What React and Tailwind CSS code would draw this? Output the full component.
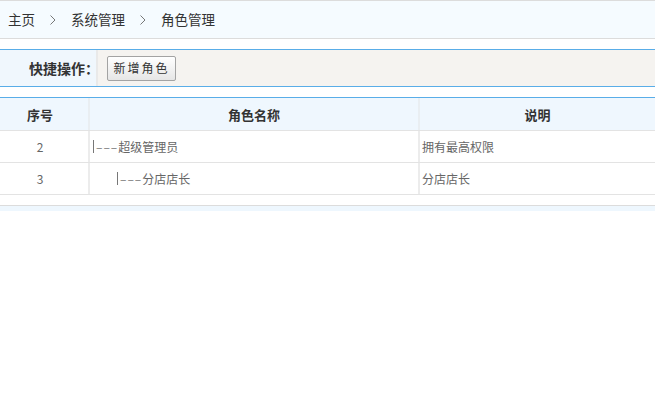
import React from 'react';

const roles = [
  { id: 2, name: '超级管理员', level: 0, desc: '拥有最高权限' },
  { id: 3, name: '分店店长', level: 1, desc: '分店店长' },
];

const Chevron = () => (
  <svg width="8" height="12" viewBox="0 0 8 12" className="mx-[14px]">
    <path d="M1.5 1.5 L6 6 L1.5 10.5" fill="none" stroke="#777" strokeWidth="1" />
  </svg>
);

const App = () => {
  return (
    <div className="w-[655px] h-[413px] bg-white font-['Noto_Sans_CJK_SC','Microsoft_YaHei',sans-serif] overflow-hidden">
      {/* --- Breadcrumb --- */}
      <div className="h-[39px] border-y border-[#dcdcdc] bg-[#f5fbff] flex items-center pl-[8px] text-[13.5px] text-[#333] leading-none">
        <span>主页</span>
        <Chevron />
        <span>系统管理</span>
        <Chevron />
        <span>角色管理</span>
      </div>

      {/* --- Quick Actions Toolbar --- */}
      <div className="mt-[10px] h-[38px] border-y border-[#59ade8] flex">
        <div className="w-[98px] shrink-0 bg-[#f0f7fd] border-r-2 border-[#e9e9e9] flex items-center pl-[29px] text-[14px] font-bold text-[#333] leading-none whitespace-nowrap">
          快捷操作：
        </div>
        <div className="flex-1 bg-[#f5f3f0] flex items-center pl-[9px]">
          <button className="h-[25px] w-[69px] border border-[#a3a3a3] rounded-[2px] bg-gradient-to-b from-white to-[#e6e6e6] text-[12px] text-[#333] tracking-[2px] leading-none">
            新增角色
          </button>
        </div>
      </div>

      {/* --- Role Table --- */}
      <div className="mt-[10px] border-t border-[#59ade8] leading-none">
        <div className="grid grid-cols-[90px_330px_1fr] h-[33px] bg-[#eff7fe] border-b border-[#e3e3e3] font-bold text-[13px] text-[#333]">
          <div className="border-r-2 border-[#e9eef2] flex items-center justify-center pr-[8px]">序号</div>
          <div className="border-r-2 border-[#e9eef2] flex items-center justify-center">角色名称</div>
          <div className="flex items-center justify-center">说明</div>
        </div>
        {roles.map((role) => (
          <div key={role.id} className="grid grid-cols-[90px_330px_1fr] h-[32px] border-b border-[#e3e3e3] text-[12px] text-[#666]">
            <div className="border-r-2 border-[#ececec] flex items-center justify-center pr-[8px]">{role.id}</div>
            <div
              className={`border-r-2 border-[#ececec] flex items-center whitespace-nowrap ${role.level === 0 ? 'pl-[3px]' : 'pl-[27px]'}`}
            >
              <span className="inline-block w-[1px] h-[13px] bg-[#777] mr-[2px]" />
              <span className="tracking-[1px] text-[#777]">–––</span>
              <span>{role.name}</span>
            </div>
            <div className="flex items-center pl-[2px]">{role.desc}</div>
          </div>
        ))}
      </div>

      {/* --- Table Footer Strip --- */}
      <div className="mt-[10px] h-[6px] border-t border-[#dcdcdc] bg-[#eef7fe]" />
    </div>
  );
};

export default App;
